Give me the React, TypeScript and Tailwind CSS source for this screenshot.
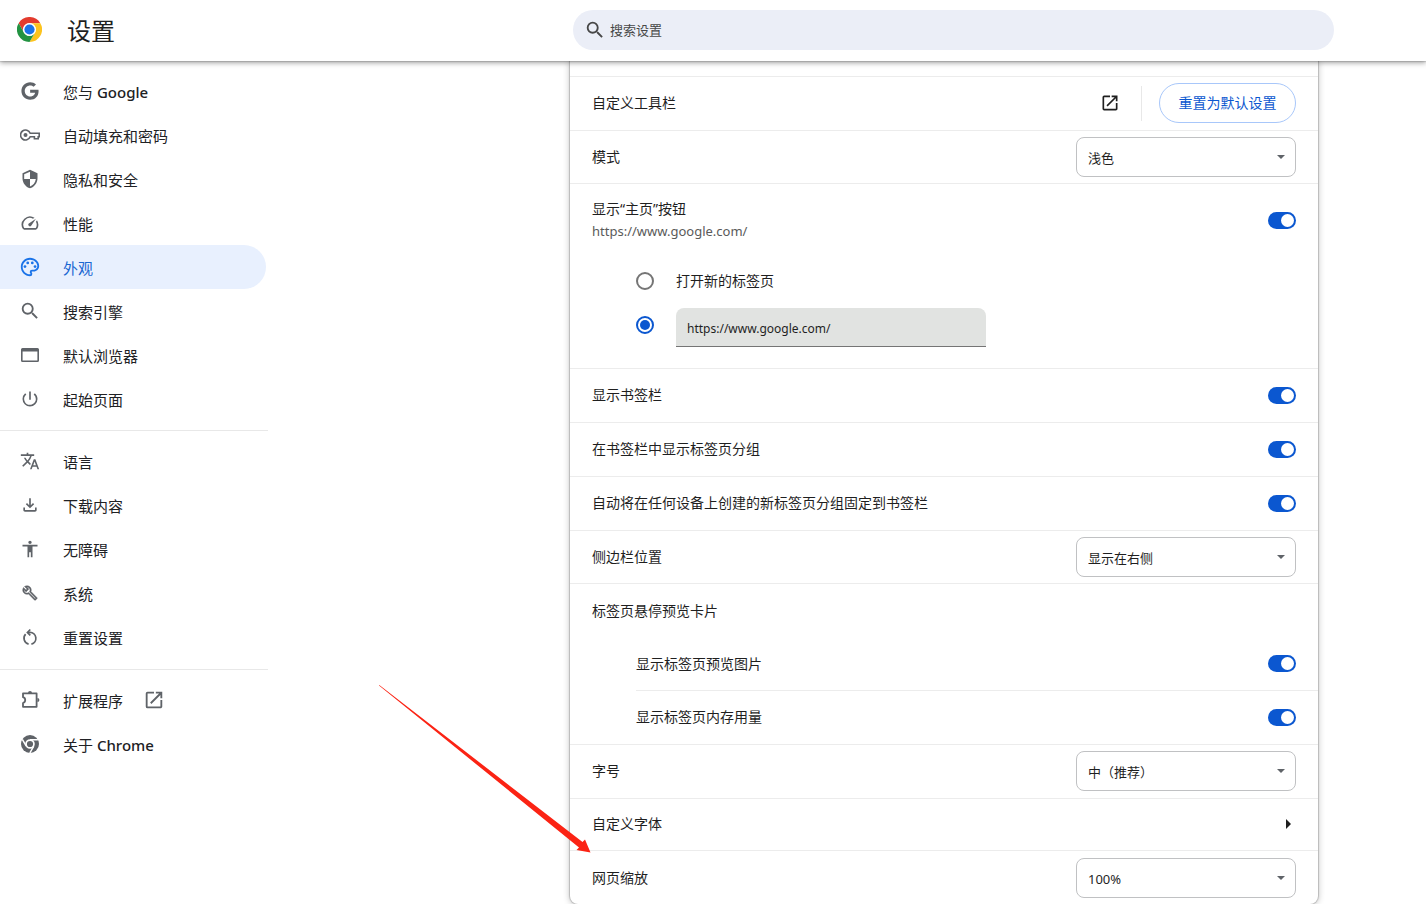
import { useState, type ReactNode } from "react";
import { FaGoogle } from "react-icons/fa";
import {
  MdAccessibility,
  MdOpenInNew,
  MdOutlineFileDownload,
  MdOutlinePalette,
  MdPowerSettingsNew,
  MdSearch,
  MdSecurity,
  MdSpeed,
  MdTranslate,
} from "react-icons/md";

type IconProps = { className?: string };
type NavItem = {
  label: string;
  latin?: string;
  icon: (props: IconProps) => ReactNode;
  iconClass?: string;
  active?: boolean;
  external?: boolean;
};

function KeyIcon({ className }: IconProps) {
  return (
    <svg viewBox="0 0 20 20" className={className} fill="none" stroke="currentColor" strokeWidth="1.6">
      <path d="M10.2 8.2a5 5 0 1 0 0 3.6h4.2v2h3.8v-2h1V8.2z" />
      <circle cx="5.5" cy="10" r="2" fill="currentColor" stroke="none" />
    </svg>
  );
}

function WindowIcon({ className }: IconProps) {
  return (
    <svg viewBox="0 0 20 20" className={className} fill="currentColor">
      <path
        fillRule="evenodd"
        d="M2.5 3h15A1.5 1.5 0 0 1 19 4.5v11a1.5 1.5 0 0 1-1.5 1.5h-15A1.5 1.5 0 0 1 1 15.5v-11A1.5 1.5 0 0 1 2.5 3zM2.6 6.4v9h14.8v-9z"
      />
    </svg>
  );
}

function WrenchIcon({ className }: IconProps) {
  return (
    <svg viewBox="0 0 24 24" className={className} fill="currentColor" stroke="currentColor" strokeWidth="0.6">
      <path d="m22.61 18.99-9.08-9.08c.93-2.34.45-5.1-1.44-7C9.79.61 6.21.4 3.66 2.26L7.5 6.11 6.08 7.52 2.25 3.69C.39 6.23.6 9.82 2.9 12.11c1.86 1.86 4.57 2.35 6.89 1.48l9.11 9.11c.39.39 1.02.39 1.41 0l2.3-2.3c.4-.38.4-1.01 0-1.41zm-3 1.6-9.46-9.46c-.61.45-1.29.72-2 .82-1.36.2-2.79-.21-3.83-1.25C3.37 9.76 2.93 8.5 3 7.26l3.09 3.09 4.24-4.24-3.09-3.09c1.24-.07 2.49.37 3.44 1.31 1.08 1.08 1.49 2.57 1.24 3.96-.12.71-.42 1.37-.88 1.96l9.45 9.45-.88.89z" />
    </svg>
  );
}

function ResetIcon({ className }: IconProps) {
  return (
    <svg viewBox="0 0 20 20" className={className} fill="none" stroke="currentColor" strokeWidth="1.7">
      <path d="M8.6 17.1A6 6 0 0 1 5.6 7.2M11.4 17.1A6 6 0 0 0 10 5.3H8" />
      <path d="M10.3 2.5L7.4 5.4L10.3 8.3" />
    </svg>
  );
}

function ExtensionIcon({ className }: IconProps) {
  return (
    <svg viewBox="0 0 20 20" className={className} fill="none" stroke="currentColor" strokeWidth="1.8" strokeLinejoin="round">
      <path d="M3 3.4h13.6v13.4H3v-3.8a3 3 0 0 0 0-5.8z" />
      <path d="M8 3a2 2 0 0 1 4 0zM17.4 8a2 2 0 0 1 0 4z" fill="currentColor" stroke="none" />
    </svg>
  );
}

function ChromeIcon({ className }: IconProps) {
  return (
    <svg viewBox="0 0 48 48" className={className}>
      <circle cx="24" cy="24" r="24" fill="currentColor" />
      <path d="M24 12.5H45M14 29.7L3.5 11.5M34 29.7L23.5 48" stroke="#fff" strokeWidth="4" />
      <circle cx="24" cy="24" r="10.5" fill="currentColor" stroke="#fff" strokeWidth="4.5" />
    </svg>
  );
}

function ChromeLogo() {
  return (
    <svg viewBox="0 0 48 48" className="size-[25px] shrink-0" aria-hidden="true">
      <path fill="#e33b2e" d="M3.2 12A24 24 0 0 1 44.8 12H24A12 12 0 0 0 13.6 30Z" />
      <path fill="#fcc31e" d="M44.8 12A24 24 0 0 1 24 48L34.4 30A12 12 0 0 0 24 12Z" />
      <path fill="#229342" d="M24 48A24 24 0 0 1 3.2 12L13.6 30A12 12 0 0 0 34.4 30Z" />
      <circle cx="24" cy="24" r="12.5" fill="#fff" />
      <circle cx="24" cy="24" r="9.8" fill="#1a73e8" />
    </svg>
  );
}

const navGroups: NavItem[][] = [
  [
    { label: "您与 ", latin: "Google", icon: FaGoogle, iconClass: "size-[18px]" },
    { label: "自动填充和密码", icon: KeyIcon },
    { label: "隐私和安全", icon: MdSecurity },
    { label: "性能", icon: MdSpeed },
    { label: "外观", icon: MdOutlinePalette, iconClass: "size-[22px] shrink-0", active: true },
    { label: "搜索引擎", icon: MdSearch, iconClass: "size-[22px] shrink-0" },
    { label: "默认浏览器", icon: WindowIcon },
    { label: "起始页面", icon: MdPowerSettingsNew },
  ],
  [
    { label: "语言", icon: MdTranslate },
    { label: "下载内容", icon: MdOutlineFileDownload },
    { label: "无障碍", icon: MdAccessibility },
    { label: "系统", icon: WrenchIcon, iconClass: "size-4" },
    { label: "重置设置", icon: ResetIcon },
  ],
  [
    { label: "扩展程序", icon: ExtensionIcon, external: true },
    { label: "关于 ", latin: "Chrome", icon: ChromeIcon, iconClass: "size-[18px]" },
  ],
];

function Sidebar() {
  return (
    <nav className="w-[268px] shrink-0 pt-2" aria-label="设置">
      {navGroups.map((group, i) => (
        <ul key={i} className={i > 0 ? "mt-[9px] border-t border-[#e8e8e8] pt-2 pb-px" : ""}>
          {group.map(({ label, latin, icon: Icon, iconClass = "size-5", active, external }) => (
            <li key={label}>
              <a
                href="#"
                aria-current={active ? "page" : undefined}
                className={`mr-0.5 flex h-11 items-center rounded-r-full pl-5 text-[15px] ${
                  active ? "bg-[#e8f0fe] text-[#1967d2]" : "text-[#202124]"
                }`}
              >
                <span className={`flex size-5 items-center justify-center ${active ? "text-[#1a73e8]" : "text-[#5f6368]"}`}>
                  <Icon className={iconClass} />
                </span>
                <span className="ml-[23px] pt-0.5">
                  {label}
                  {latin && <span className="font-medium">{latin}</span>}
                </span>
                {external && <MdOpenInNew className="ml-5 size-[22px] text-[#5f6368]" />}
              </a>
            </li>
          ))}
        </ul>
      ))}
    </nav>
  );
}

function Toggle({ label }: { label: string }) {
  const [on, setOn] = useState(true);
  return (
    <input
      type="checkbox"
      role="switch"
      aria-label={label}
      checked={on}
      onChange={() => setOn(!on)}
      className="flex h-[17px] w-7 shrink-0 cursor-pointer appearance-none items-center rounded-full bg-[#80868b] px-0.5 before:size-[13px] before:rounded-full before:bg-white checked:justify-end checked:bg-[#0b57d0]"
    />
  );
}

function Select({ label, options }: { label: string; options: string[] }) {
  return (
    <div className="relative w-[220px] shrink-0">
      <select
        aria-label={label}
        className="h-10 w-full appearance-none rounded-lg border border-[#c0c1c3] bg-white pt-0.5 pr-8 pl-[11px] text-[13px] text-[#1f1f1f]"
      >
        {options.map((o) => (
          <option key={o}>{o}</option>
        ))}
      </select>
      <svg viewBox="0 0 8 4" className="pointer-events-none absolute top-[18px] right-[11px] h-1 w-2" aria-hidden="true">
        <path d="M0 0h8L4 4z" fill="#5f6368" />
      </svg>
    </div>
  );
}

function Row({ label, children, className = "h-[54px] pb-px" }: { label: string; children?: ReactNode; className?: string }) {
  return (
    <div className={`flex items-center justify-between border-t border-[#ececec] px-[22px] ${className}`}>
      <span>{label}</span>
      {children}
    </div>
  );
}

function HomeButtonSection() {
  const [choice, setChoice] = useState("url");
  const [url, setUrl] = useState("https://www.google.com/");
  const radio =
    "flex size-[18px] shrink-0 appearance-none items-center justify-center rounded-full border-2 border-[#757575] before:size-2.5 before:rounded-full checked:border-[#0b57d0] checked:before:bg-[#0b57d0]";

  return (
    <div className="border-t border-[#ececec] pb-[21px]">
      <div className="flex h-[72px] items-center justify-between px-[22px]">
        <div>
          <p className="leading-[22px]">显示“主页”按钮</p>
          <p className="text-[13px] leading-[22px] text-[#5a5a5a]">{url}</p>
        </div>
        <Toggle label="显示“主页”按钮" />
      </div>
      <div className="mt-[3px] pr-[22px] pl-[66px]">
        <label className="flex h-11 items-center gap-[22px]">
          <input type="radio" name="home" className={radio} checked={choice === "ntp"} onChange={() => setChoice("ntp")} />
          打开新的标签页
        </label>
        <div className="flex h-11 items-center gap-[22px]">
          <input
            type="radio"
            name="home"
            aria-label="输入自定义网址"
            className={radio}
            checked={choice === "url"}
            onChange={() => setChoice("url")}
          />
          <input
            type="text"
            aria-label="自定义网址"
            value={url}
            onChange={(e) => setUrl(e.target.value)}
            className="h-[39px] w-[310px] self-end rounded-t-lg border-b border-[#757575] bg-[#e1e3e1] px-[11px] pt-0.5 text-[12px] text-[#1f1f1f] outline-none"
          />
        </div>
      </div>
    </div>
  );
}

export default function App() {
  return (
    <div className="relative bg-white font-['Noto_Sans','Noto_Sans_CJK_SC',sans-serif] text-[14px] leading-5 text-[#1f1f1f]">
      <header className="relative z-10 flex h-[61px] items-center bg-white pr-[92px] pb-0.5 pl-[17px] shadow-[0_1px_1px_rgba(0,0,0,0.12),0_2px_5px_rgba(0,0,0,0.35)]">
        <ChromeLogo />
        <h1 className="ml-[25px] shrink-0 pt-0.5 text-[24px] leading-8">设置</h1>
        <div className="ml-auto flex h-10 w-full max-w-[761px] items-center rounded-full bg-[#ebeef7] pl-[11px]">
          <MdSearch className="size-[22px] shrink-0 text-[#474747]" />
          <input
            type="search"
            aria-label="搜索设置"
            placeholder="搜索设置"
            className="ml-1 w-full bg-transparent text-[13px] outline-none placeholder:text-[#474747]"
          />
        </div>
      </header>

      <div className="flex">
        <Sidebar />
        <main className="flex flex-1 justify-end pr-[108px]">
          <section className="w-full max-w-[748px] rounded-b-lg bg-white pt-[15px] shadow-[0_0_1px_1px_rgba(0,0,0,0.18),0_1px_6px_1px_rgba(0,0,0,0.2)]">
            <Row label="自定义工具栏">
              <div className="flex items-center">
                <button type="button" aria-label="自定义工具栏">
                  <MdOpenInNew className="size-5" />
                </button>
                <div className="ml-[21px] h-[35px] w-px bg-[#e8e8e8]" />
                <button type="button" className="ml-[17px] h-10 w-[137px] rounded-full border border-[#a8c7fa] text-[#0b57d0]">
                  重置为默认设置
                </button>
              </div>
            </Row>
            <Row label="模式" className="h-[53px]">
              <Select label="模式" options={["浅色", "深色", "设备"]} />
            </Row>
            <HomeButtonSection />
            <Row label="显示书签栏">
              <Toggle label="显示书签栏" />
            </Row>
            <Row label="在书签栏中显示标签页分组">
              <Toggle label="在书签栏中显示标签页分组" />
            </Row>
            <Row label="自动将在任何设备上创建的新标签页分组固定到书签栏">
              <Toggle label="自动将在任何设备上创建的新标签页分组固定到书签栏" />
            </Row>
            <Row label="侧边栏位置" className="h-[53px]">
              <Select label="侧边栏位置" options={["显示在右侧", "显示在左侧"]} />
            </Row>
            <Row label="标签页悬停预览卡片" className="h-[54px]" />
            <div className="pl-[66px]">
              <div className="flex h-[53px] items-center justify-between pr-[22px]">
                <span>显示标签页预览图片</span>
                <Toggle label="显示标签页预览图片" />
              </div>
              <div className="flex h-[54px] items-center justify-between border-t border-[#ececec] pr-[22px] pb-px">
                <span>显示标签页内存用量</span>
                <Toggle label="显示标签页内存用量" />
              </div>
            </div>
            <Row label="字号">
              <Select label="字号" options={["中（推荐）", "大", "小"]} />
            </Row>
            <Row label="自定义字体" className="h-[52px] pb-px">
              <button type="button" aria-label="自定义字体" className="mr-[5px]">
                <svg viewBox="0 0 5 10" className="h-2.5 w-[5px]">
                  <path d="M0 0v10l5-5z" fill="#1f1f1f" />
                </svg>
              </button>
            </Row>
            <Row label="网页缩放" className="h-[54px]">
              <Select label="网页缩放" options={["100%", "125%", "150%"]} />
            </Row>
          </section>
        </main>
      </div>

      {/* Pointer to the page zoom row */}
      <svg viewBox="0 0 212 168" className="pointer-events-none absolute top-[685px] left-[379px] h-[168px] w-[212px]" aria-hidden="true">
        <path d="M0.3 0L203.5 157L206 154.5L211.5 167.5L197.5 165L200 162.5L0 0.4Z" fill="#fb2314" />
      </svg>
    </div>
  );
}
